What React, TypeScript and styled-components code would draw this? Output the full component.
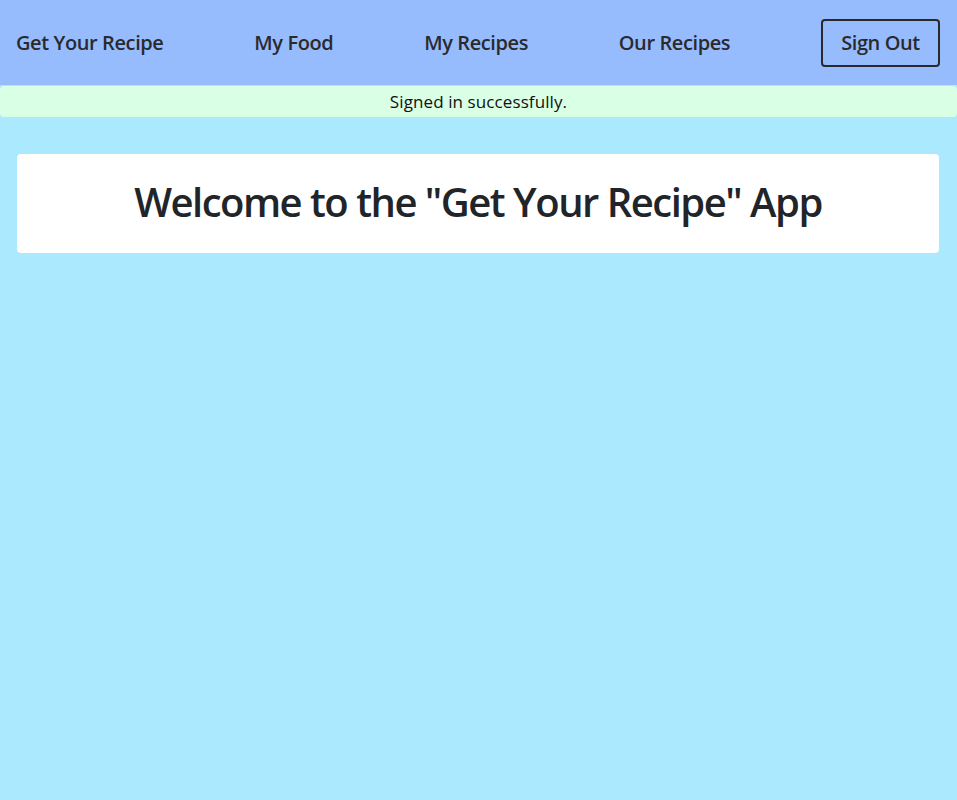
import React from "react";
import styled, { createGlobalStyle } from "styled-components";

const Global = createGlobalStyle`
  html, body { margin: 0; padding: 0; }
  body {
    background: #abe9fe;
    font-family: "Open Sans", "Noto Sans", sans-serif;
    color: #212529;
    min-height: 800px;
  }
`;

const NavBar = styled.nav`
  height: 85px;
  background: #96bcfe;
  display: flex;
  align-items: center;
  justify-content: space-between;
  padding: 0 17px 0 16px;
  box-sizing: border-box;
`;

const NavLink = styled.a`
  font-size: 20px;
  font-weight: 600;
  color: #2a2a2e;
  text-decoration: none;
  letter-spacing: -0.4px;
`;

const NavButton = styled.button`
  height: 48px;
  width: 119px;
  padding: 0;
  background: transparent;
  border: 2px solid #2a2a2e;
  border-radius: 4px;
  font-family: inherit;
  font-size: 20px;
  font-weight: 600;
  color: #2a2a2e;
  letter-spacing: -0.4px;
`;

const Alert = styled.div`
  margin-top: 1px;
  height: 31px;
  background: #d9ffe5;
  border-radius: 4px;
  display: flex;
  align-items: center;
  justify-content: center;
  font-size: 17px;
  color: #111;
  letter-spacing: 0.1px;
`;

const Main = styled.main`
  padding: 37px 18px 0 17px;
`;

const Card = styled.section`
  background: #fff;
  border-radius: 4px;
  height: 99px;
  box-sizing: border-box;
  padding-bottom: 5px;
  display: flex;
  align-items: center;
  justify-content: center;
`;

const Title = styled.h1`
  margin: 0;
  font-size: 40px;
  font-weight: 600;
  color: #212529;
  letter-spacing: -1.5px;
`;

export default function App() {
  return (
    <>
      <Global />
      <NavBar>
        <NavLink href="#">Get Your Recipe</NavLink>
        <NavLink href="#">My Food</NavLink>
        <NavLink href="#">My Recipes</NavLink>
        <NavLink href="#">Our Recipes</NavLink>
        <NavButton>Sign Out</NavButton>
      </NavBar>
      <Alert>Signed in successfully.</Alert>
      <Main>
        <Card>
          <Title>Welcome to the "Get Your Recipe" App</Title>
        </Card>
      </Main>
    </>
  );
}
